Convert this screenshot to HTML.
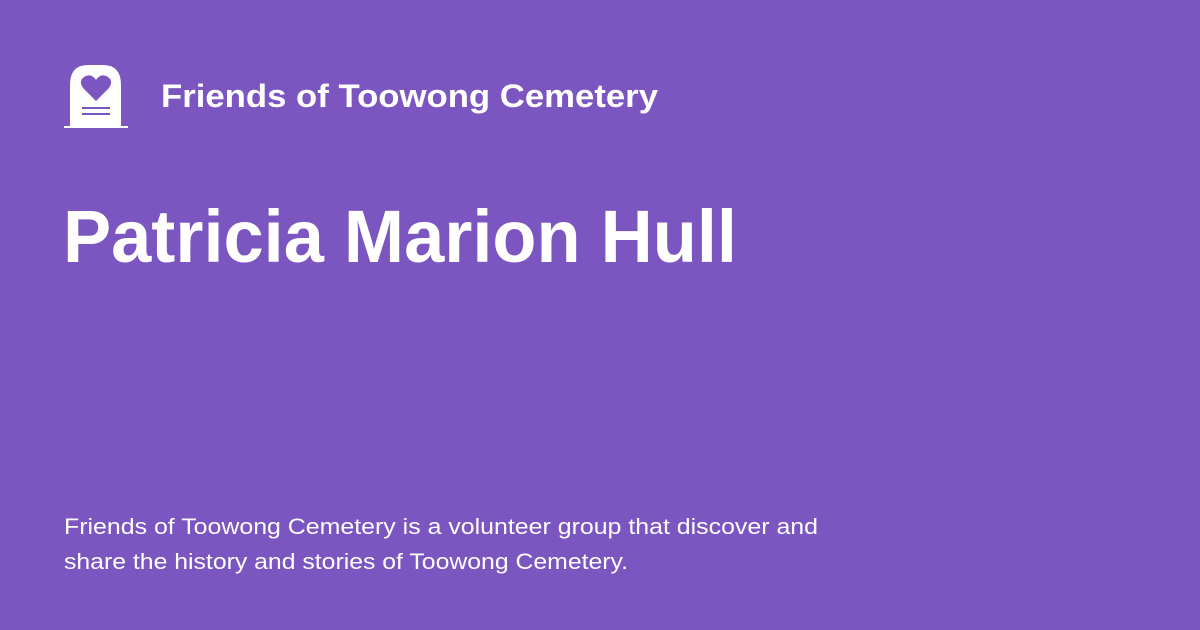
<!DOCTYPE html>
<html><head><style>
html,body{margin:0;padding:0;width:1200px;height:630px;overflow:hidden;background:#7b55c0}
svg{display:block}
</style></head><body>
<svg width="1200" height="630" xmlns="http://www.w3.org/2000/svg">
<rect width="1200" height="630" fill="#7b55c0"/>
<path d="M70 126 V85 Q70 65 88 65 H103 Q121 65 121 85 V126 Z" fill="#fff"/>
<rect x="64" y="126" width="64" height="2" fill="#fff"/>
<path d="M96 101 L84 89 Q79 83 82 79 Q86 74 92 76 Q95 78 96 80 Q97 78 100 76 Q106 74 110 79 Q113 83 108 89 Z" fill="#7b55c0"/>
<rect x="82" y="107" width="28" height="2" fill="#7b55c0"/>
<rect x="82" y="113" width="28" height="2" fill="#7b55c0"/>
<text x="161" y="107" font-family="Liberation Sans, sans-serif" font-weight="bold" font-size="32" fill="#fff" textLength="497" lengthAdjust="spacingAndGlyphs">Friends of Toowong Cemetery</text>
<text x="63" y="262" font-family="Liberation Sans, sans-serif" font-weight="bold" font-size="74" fill="#fff" textLength="674" lengthAdjust="spacingAndGlyphs">Patricia Marion Hull</text>
<text x="64" y="534" font-family="Liberation Sans, sans-serif" font-size="22" fill="#fff" textLength="754" lengthAdjust="spacingAndGlyphs">Friends of Toowong Cemetery is a volunteer group that discover and</text>
<text x="64" y="569" font-family="Liberation Sans, sans-serif" font-size="22" fill="#fff" textLength="564" lengthAdjust="spacingAndGlyphs">share the history and stories of Toowong Cemetery.</text>
</svg>
</body></html>
